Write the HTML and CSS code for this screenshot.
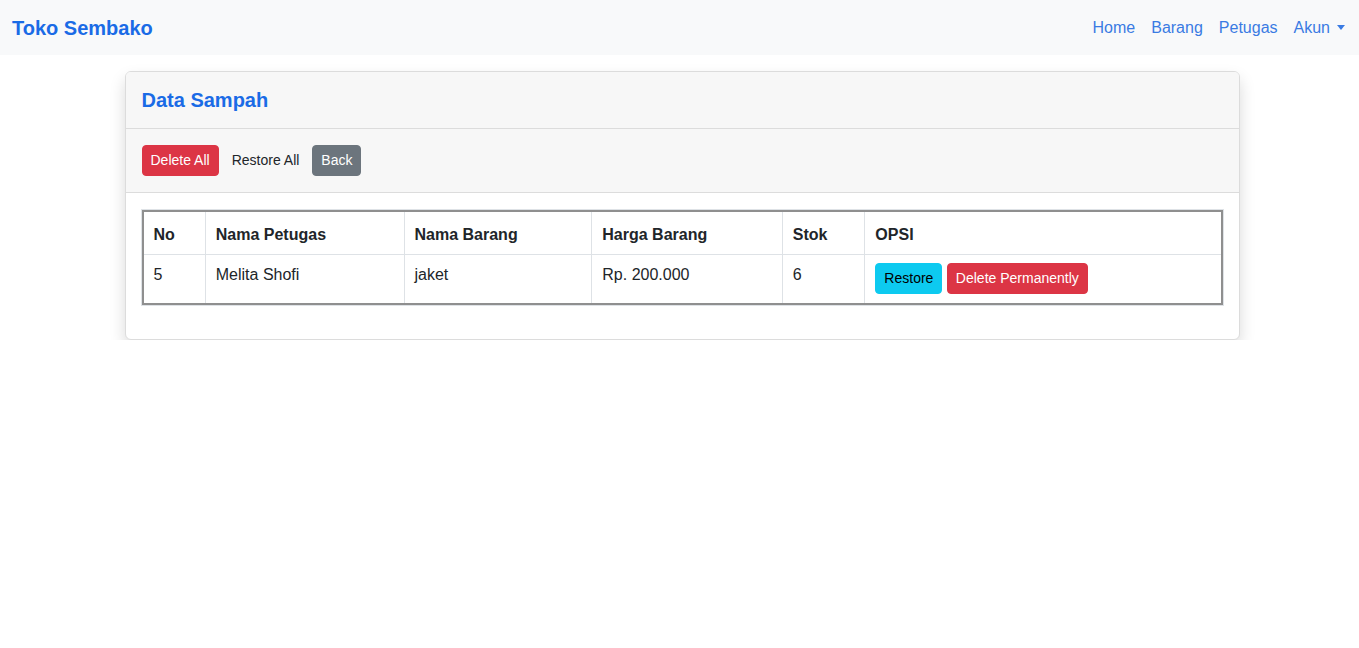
FILE: index.html
```html
<!DOCTYPE html>
<html lang="id">
<head>
<meta charset="utf-8">
<title>Data Sampah - Toko Sembako</title>
<link rel="stylesheet" href="styles.css">
</head>
<body>
<nav class="navbar">
  <a class="brand" href="#">Toko Sembako</a>
  <ul class="nav">
    <li><a class="nav-link" href="#">Home</a></li>
    <li><a class="nav-link" href="#">Barang</a></li>
    <li><a class="nav-link" href="#">Petugas</a></li>
    <li><a class="nav-link dropdown" href="#">Akun<span class="caret"></span></a></li>
  </ul>
</nav>
<main class="page">
  <div class="card">
    <div class="card-header">
      <h4 class="title">Data Sampah</h4>
    </div>
    <div class="card-header actions">
      <a class="btn btn-danger" href="#">Delete All</a>
      <a class="btn btn-plain" href="#">Restore All</a>
      <a class="btn btn-secondary" href="#">Back</a>
    </div>
    <div class="card-body">
      <table class="table">
        <thead>
          <tr>
            <th>No</th>
            <th>Nama Petugas</th>
            <th>Nama Barang</th>
            <th>Harga Barang</th>
            <th>Stok</th>
            <th>OPSI</th>
          </tr>
        </thead>
        <tbody>
          <tr>
            <td>5</td>
            <td>Melita Shofi</td>
            <td>jaket</td>
            <td>Rp. 200.000</td>
            <td>6</td>
            <td><a class="btn btn-info" href="#">Restore</a> <a class="btn btn-danger" href="#">Delete Permanently</a></td>
          </tr>
        </tbody>
      </table>
    </div>
  </div>
</main>
</body>
</html>
```

FILE: styles.css
```css
* { box-sizing: border-box; }

body {
  margin: 0;
  font-family: "Liberation Sans", Arial, sans-serif;
  font-size: 16px;
  line-height: 1.5;
  color: #212529;
  background: #fff;
}

a { text-decoration: none; }

.navbar {
  display: flex;
  align-items: center;
  justify-content: space-between;
  background: #f8f9fa;
  padding: 8px 6px 8px 12px;
  height: 55px;
}

.brand {
  font-size: 20px;
  font-weight: 700;
  color: #1a6be6;
  line-height: 30px;
  padding: 5px 0;
}

.nav {
  display: flex;
  list-style: none;
  margin: 0;
  padding: 0;
}

.nav-link {
  display: block;
  padding: 8px 8px;
  color: #3a7be3;
  font-size: 16px;
  line-height: 24px;
}

.caret {
  display: inline-block;
  margin-left: 7px;
  vertical-align: 3px;
  border-top: 5px solid #3a7be3;
  border-left: 4.5px solid transparent;
  border-right: 4.5px solid transparent;
}

.page {
  padding-top: 16px;
}

.card {
  width: 1115px;
  margin-left: calc(50% - 555px);
  border: 1px solid #dcdcdc;
  border-radius: 6px;
  box-shadow: 0 8px 16px rgba(0, 0, 0, 0.15);
  overflow: hidden;
  background: #fff;
}

.card-header {
  background: #f7f7f7;
  border-bottom: 1px solid #dcdcdc;
  padding: 16px;
}

.title {
  margin: 0;
  font-size: 20px;
  line-height: 24px;
  font-weight: 700;
  color: #1a6be6;
}

.actions {
  padding: 16px;
  display: flex;
  gap: 4px;
}

.btn {
  display: inline-block;
  font-size: 14px;
  line-height: 21px;
  padding: 4px 8px;
  border: 1px solid transparent;
  border-radius: 4px;
  vertical-align: middle;
}

.btn-danger { background: #dc3545; color: #fff; border-color: #dc3545; }
.btn-secondary { background: #6c757d; color: #fff; border-color: #6c757d; }
.btn-info { background: #0dcaf0; color: #000; border-color: #0dcaf0; }
.btn-plain { color: #212529; }

.card-body {
  padding: 16px 16px 17px;
}

.table {
  width: 100%;
  border-collapse: collapse;
  border: 2px solid #8f8f8f;
  outline: 1px solid #dee2e6;
  margin: 1px 0 17px;
  vertical-align: top;
}

.table th,
.table td {
  border: 1px solid #dee2e6;
  padding: 8px 8px 9px 10px;
  text-align: left;
  vertical-align: top;
}

.table th {
  font-weight: 700;
  padding: 11px 8px 7px 10px;
}
```
